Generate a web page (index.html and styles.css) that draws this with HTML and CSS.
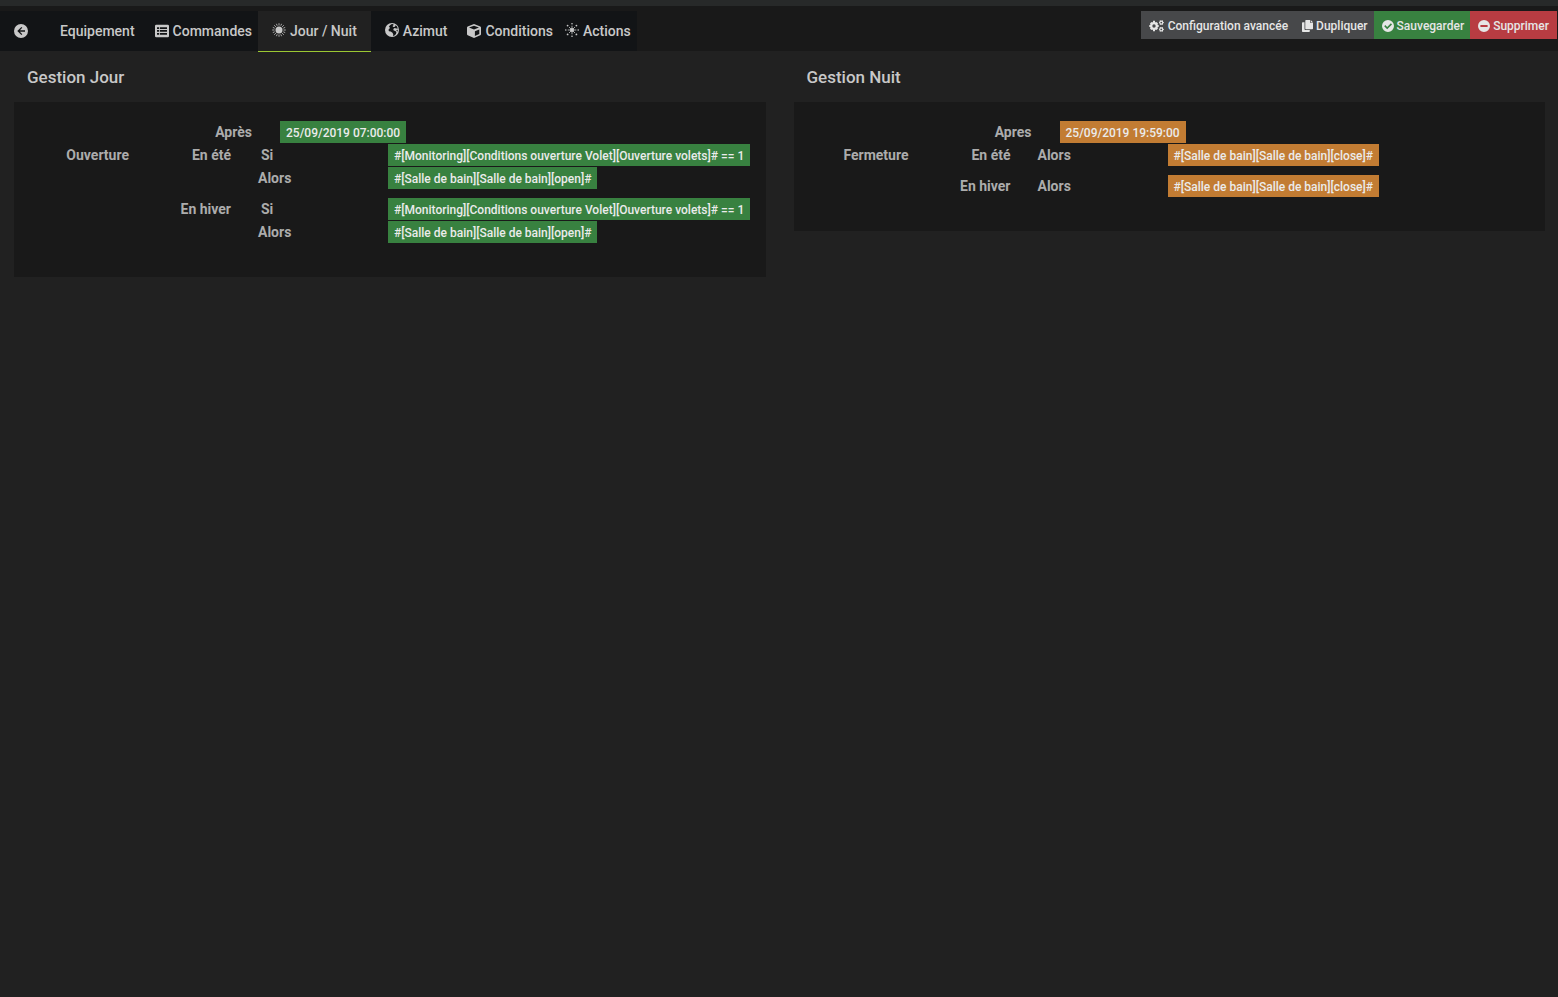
FILE: index.html
```html
<!DOCTYPE html>
<html lang="fr">
<head>
<meta charset="utf-8">
<meta name="viewport" content="width=device-width, initial-scale=1">
<title>Gestion des volets</title>
<link rel="stylesheet" href="styles.css">
</head>
<body>
<div class="strip"></div>
<header class="bar">
  <nav class="tabs" aria-label="Sections">
    <a class="tab" href="#retour" aria-label="Retour"><svg class="icon" viewBox="0 0 14 14"><path fill-rule="evenodd" d="M7 0a7 7 0 1 0 0 14A7 7 0 0 0 7 0zM7.400 2.900l.9.9L5.900 6.300H11v1.400H5.900l2.400 2.500-.9.9L3.300 7z"/></svg></a>
    <a class="tab tab-plain" href="#equipement">Equipement</a>
    <a class="tab tab-tight" href="#commandes"><svg class="icon" viewBox="0 0 14 14"><path fill-rule="evenodd" d="M1.300.8h11.400q1.300 0 1.300 1.300v9.800q0 1.300-1.300 1.300H1.300Q0 13.200 0 11.900V2.100Q0 .8 1.300.8zM2 3.200h2.200v1.700H2zM5 3.200h7v1.700H5zM2 6.100h2.200v1.700H2zM5 6.100h7v1.700H5zM2 9h2.200v1.700H2zM5 9h7v1.700H5z"/></svg>Commandes</a>
    <a class="tab active" href="#jour-nuit" aria-current="page"><svg class="icon icon-raised" viewBox="0 0 14 14"><circle cx="7" cy="7" r="3.500"/><path class="rays" d="M7 .2v2.300M7 11.500v2.300M.2 7h2.300M11.500 7h2.300M2.200 2.200l1.700 1.700M10.100 10.100l1.700 1.700M2.200 11.800l1.700-1.700M10.100 3.900l1.700-1.700M4.400.8l.8 1.900M8.800 11.300l.8 1.900M9.600.8l-.8 1.900M5.200 11.300l-.8 1.900M.8 4.400l1.900.8M11.300 8.800l1.900.8M.8 9.600l1.900-.8M11.300 5.200l1.900-.8"/></svg>Jour / Nuit</a>
    <a class="tab" href="#azimut"><svg class="icon icon-raised" viewBox="0 0 14 14"><path fill-rule="evenodd" d="M7 0a7 7 0 1 0 0 14A7 7 0 0 0 7 0zM6.200 1.300L8 1l.7 1-1.200.9.800 1.200 1.700-.4.500-1.500 1.200.9 1.200 2.300-1.700.2-1.500-.7-1.400 1 .4 1.500 1.700.7 1 1.200-.4 1.800-1.500 1.500-1.600.4.400-1.600-.8-1.700-1.800-1.300-1.700-.2-.6-1.500 1.100-1 .2-1.800-1-.5zM11.400 7l1.400-.3-.2 1.900-.8-.3z"/></svg>Azimut</a>
    <a class="tab tab-tight" href="#conditions"><svg class="icon" viewBox="0 0 14 14"><path fill-rule="evenodd" d="M7 0l6.300 2.400q.7.300.7 1v6.900q0 .7-.7 1L7 14 .7 11.300q-.7-.3-.7-1V3.400q0-.7.700-1zM7 1.700L2 3.600l5 2 5-2zM7.900 7.200v4.700l4.400-1.900V5.400z"/></svg>Conditions</a>
    <a class="tab tab-tight" href="#actions"><svg class="icon icon-raised" viewBox="0 0 14 14"><circle cx="7" cy="7" r="2"/><path class="rays" d="M7 2.700v8.600M2.700 7h8.600M4 4l6 6M4 10l6-6"/><circle cx="7" cy=".8" r=".8"/><circle cx="7" cy="13.200" r=".8"/><circle cx=".8" cy="7" r=".8"/><circle cx="13.200" cy="7" r=".8"/><circle cx="2.600" cy="2.600" r=".9"/><circle cx="11.400" cy="2.600" r=".9"/><circle cx="2.600" cy="11.400" r=".9"/><circle cx="11.400" cy="11.400" r=".9"/></svg>Actions</a>
  </nav>
  <div class="actions">
    <button class="btn btn-config" type="button"><svg class="icon icon-wide" viewBox="0 0 15 12"><circle class="gear" cx="5" cy="6" r="2.800"/><path class="teeth" d="M5 .7v2M5 9.300v2M.3 6h2M7.700 6h2M1.700 2.700l1.400 1.400M6.900 7.900l1.400 1.400M1.700 9.300l1.400-1.400M6.900 4.100l1.400-1.400"/><circle class="gear-small" cx="12.300" cy="2.600" r="1.500"/><circle class="gear-small" cx="12.300" cy="9.400" r="1.500"/><path class="teeth-small" d="M10 2.600h.8M13.800 2.600h1M11.200.4l.4.900M13.400.4l-.4.900M11.200 4.800l.4-.9M13.400 4.800l-.4-.9M10 9.400h.8M13.800 9.400h1M11.200 7.200l.4.900M13.400 7.200l-.4.900M11.200 11.600l.4-.9M13.400 11.600l-.4-.9"/></svg>Configuration avancée</button>
    <button class="btn" type="button"><svg class="icon icon-copy" viewBox="0 0 11 12"><path d="M4 0h4v2.800h3v5.700q0 .7-.7.700H4q-.7 0-.7-.7V.7Q3.300 0 4 0zM8.700 0L11 2.200H8.700zM.7 2.200h1.800v7q0 .8.8.8h4.500v1.300q0 .7-.7.700H.7q-.7 0-.7-.7V2.900q0-.7.700-.7z"/></svg>Dupliquer</button>
    <button class="btn btn-save" type="button"><svg class="icon icon-small" viewBox="0 0 12 12"><path fill-rule="evenodd" d="M6 0a6 6 0 1 0 0 12A6 6 0 0 0 6 0zM5.200 9.200L2.200 6.200l1.100-1.100 1.900 1.900L8.900 3.300 10 4.400z"/></svg>Sauvegarder</button>
    <button class="btn btn-delete" type="button"><svg class="icon icon-small" viewBox="0 0 12 12"><path fill-rule="evenodd" d="M6 0a6 6 0 1 0 0 12A6 6 0 0 0 6 0zM2.400 5h7.200v2H2.400z"/></svg>Supprimer</button>
  </div>
</header>
<main class="columns">
  <section>
    <h1 class="title">Gestion Jour</h1>
    <div class="panel day">
      <div class="row row-time"><span class="name">Après</span><span class="tag">25/09/2019 07:00:00</span></div>
      <div class="row"><span class="name">Ouverture</span><span class="name">En été</span><span class="word word-if">Si</span><span class="tag">#[Monitoring][Conditions ouverture Volet][Ouverture volets]# == 1</span></div>
      <div class="row"><span class="word">Alors</span><span class="tag">#[Salle de bain][Salle de bain][open]#</span></div>
      <div class="row row-group"><span class="name season">En hiver</span><span class="word word-if">Si</span><span class="tag">#[Monitoring][Conditions ouverture Volet][Ouverture volets]# == 1</span></div>
      <div class="row"><span class="word">Alors</span><span class="tag">#[Salle de bain][Salle de bain][open]#</span></div>
    </div>
  </section>
  <section>
    <h1 class="title">Gestion Nuit</h1>
    <div class="panel night">
      <div class="row row-time"><span class="name">Apres</span><span class="tag">25/09/2019 19:59:00</span></div>
      <div class="row"><span class="name">Fermeture</span><span class="name">En été</span><span class="word">Alors</span><span class="tag">#[Salle de bain][Salle de bain][close]#</span></div>
      <div class="row row-group"><span class="name season">En hiver</span><span class="word">Alors</span><span class="tag">#[Salle de bain][Salle de bain][close]#</span></div>
    </div>
  </section>
</main>
</body>
</html>
```
FILE: styles.css
```css
* { box-sizing: border-box; }
body {
  margin: 0;
  min-height: 100vh;
  background: #212121;
  color: #c8c8c8;
  font: 500 14px/20px Roboto, sans-serif;
}
.strip { height: 6px; background: #272929; }
.bar {
  display: flex;
  justify-content: space-between;
  align-items: flex-start;
  padding-top: 5px;
  padding-right: 1px;
  background: #191919;
}
.tabs { display: flex; height: 40px; background: #121416; }
.tab {
  display: flex;
  align-items: center;
  gap: 4px;
  height: 40px;
  padding: 0 14px;
  color: #c8c8c8;
  text-decoration: none;
  white-space: nowrap;
}
.tab-plain { padding-left: 18px; }
.tab-tight { padding: 0 6px; }
.tab.active { height: 41px; background: #212121; border-bottom: 1px solid #9bc832; }
.icon { flex: none; width: 14px; height: 14px; fill: currentColor; }
.icon-raised { margin-bottom: 2px; }
.rays { fill: none; stroke: currentColor; stroke-width: 0.8; }
.gear { fill: none; stroke: currentColor; stroke-width: 2.2; }
.teeth { fill: none; stroke: currentColor; stroke-width: 2; }
.gear-small { fill: none; stroke: currentColor; stroke-width: 1.2; }
.teeth-small { fill: none; stroke: currentColor; stroke-width: 1; }
.actions { display: flex; }
.btn {
  display: flex;
  align-items: center;
  gap: 3px;
  height: 28px;
  padding: 2px 6px 0 8px;
  border: 0;
  background: #47484a;
  color: #e6e6e6;
  font: 500 12px/18px Roboto, sans-serif;
  white-space: nowrap;
}
.btn .icon { width: 12px; height: 12px; margin-bottom: 1px; }
.btn .icon-wide { width: 15px; }
.btn .icon-copy { width: 11px; }
.btn-config { gap: 4px; }
.btn-save { background: #388140; }
.btn-delete { background: #b83c42; padding-right: 8px; }
.columns { display: grid; grid-template-columns: 1fr 1fr; gap: 28px; padding: 0 13px 0 14px; }
.title { margin: 0; padding: 15px 13px 13px; font: 500 17px/23px Roboto, sans-serif; }
.panel { padding: 19px 0 33px; background: #191919; color: #acacac; font-weight: 700; }
.row { display: grid; grid-template-columns: 115px 102px 157px 1fr; height: 23px; line-height: 22px; white-space: nowrap; }
.row-time { grid-template-columns: 238px 1fr; column-gap: 28px; }
.row-group { margin-top: 8px; }
.name { text-align: right; }
.season { grid-column: 2; }
.word { grid-column: 3; padding-left: 27px; }
.word-if { padding-left: 30px; }
.tag {
  justify-self: start;
  height: 22px;
  padding: 0 6px;
  color: #ebebeb;
  font-size: 12px;
  font-weight: 500;
  line-height: 24px;
}
.day .tag { background: #388140; }
.night .tag { background: #c27c33; }
```
